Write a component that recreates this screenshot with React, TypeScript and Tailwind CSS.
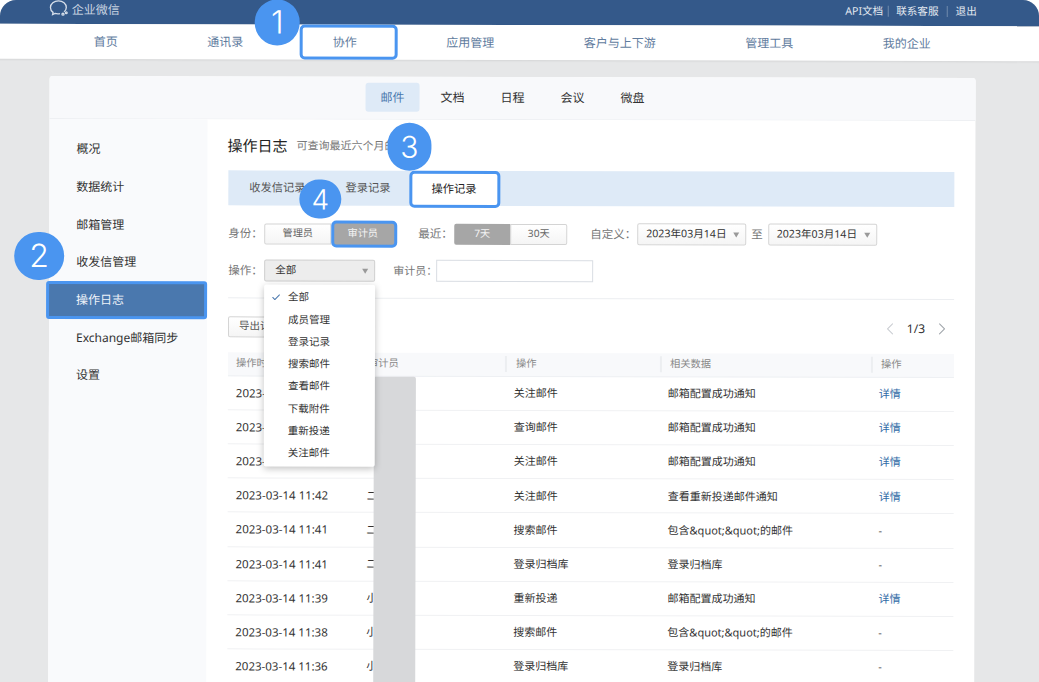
import React from "react";
import { Check, ChevronLeft, ChevronRight } from "lucide-react";

const navItems = ["首页", "通讯录", "协作", "应用管理", "客户与上下游", "管理工具", "我的企业"];
const subTabs = ["邮件", "文档", "日程", "会议", "微盘"];
const sideItems = ["概况", "数据统计", "邮箱管理", "收发信管理", "操作日志", "Exchange邮箱同步", "设置"];
const menu = ["全部", "成员管理", "登录记录", "搜索邮件", "查看邮件", "下载附件", "重新投递", "关注邮件"];
const rows = [
  ["2023-03-14 11:46", "", "关注邮件", "邮箱配置成功通知", "详情"],
  ["2023-03-14 11:45", "", "查询邮件", "邮箱配置成功通知", "详情"],
  ["2023-03-14 11:44", "", "关注邮件", "邮箱配置成功通知", "详情"],
  ["2023-03-14 11:42", "二", "关注邮件", "查看重新投递邮件通知", "详情"],
  ["2023-03-14 11:41", "二", "搜索邮件", "包含&quot;&quot;的邮件", "-"],
  ["2023-03-14 11:41", "二", "登录归档库", "登录归档库", "-"],
  ["2023-03-14 11:39", "小", "重新投递", "邮箱配置成功通知", "详情"],
  ["2023-03-14 11:38", "小", "搜索邮件", "包含&quot;&quot;的邮件", "-"],
  ["2023-03-14 11:36", "小", "登录归档库", "登录归档库", "-"],
];

function Caret() {
  return <span className="w-0 h-0 border-l-[3px] border-r-[3px] border-t-[5px] border-l-transparent border-r-transparent border-t-[#999]" />;
}

function DateSelect() {
  return (
    <div className="w-[109px] h-[21.5px] flex items-center justify-between pl-[8px] pr-[6px] border border-[#d4d4d4] rounded-[2px] bg-gradient-to-b from-white to-[#f5f5f5] text-[10.6px] text-[#333] whitespace-nowrap">
      <span>2023年03月14日</span>
      <Caret />
    </div>
  );
}

function Badge({ n, cls }: { n: string; cls: string }) {
  return (
    <div className={`absolute rounded-full bg-[#4a95f0] text-white flex items-center justify-center font-['Inter',sans-serif] font-light ${cls}`}>
      {n}
    </div>
  );
}

export default function App() {
  return (
    <div className="relative w-[1039px] h-[682px] overflow-hidden rounded-t-[16px] bg-[#e6e7e8] font-['Noto_Sans','Noto_Sans_CJK_SC',sans-serif] text-[#333]">
      <div className="relative w-[1055px] h-[698px] -ml-[8px] -mt-[8px] rotate-[0.13deg] overflow-hidden">
        {/* top bar */}
        <header className="h-[33px] pt-[8px] bg-[#34598a] flex items-center pl-[56px] pr-[71px]">
          <svg viewBox="0 0 20 18" className="w-[20px] h-[17px] -mt-[6px]" fill="none" stroke="#d5deea" strokeWidth="1.4">
            <path d="M15.6 12.5c1.6-1.3 2.4-3 2.4-4.6C18 4 14.3 1 9.7 1S1.2 4 1.2 7.9c0 2.1 1 4 2.8 5.3l-.5 2.4 2.6-1.3c1.6.5 3.6.6 5.2.2" />
            <circle cx="14.5" cy="15" r="1.1" />
            <circle cx="18" cy="13.5" r="0.9" />
          </svg>
          <span className="ml-[3px] -mt-[4px] text-[12px] text-[#c9d4e1]">企业微信</span>
          <div className="ml-auto flex items-center text-[10.6px] text-[#e4eaf1] -mt-[4px]">
            <span>API文档</span>
            <span className="ml-[5px] mr-[7px] w-px h-[11px] bg-[#6f8bad]" />
            <span>联系客服</span>
            <span className="mx-[8px] w-px h-[11px] bg-[#6f8bad]" />
            <span>退出</span>
          </div>
        </header>

        {/* main nav */}
        <nav className="h-[35px] bg-white flex items-stretch gap-[23.5px] pl-[68px] shadow-[0_1px_2px_rgba(0,0,0,0.08)] text-[12px] text-[#5f7c9e]">
          {navItems.map((item, i) => (
            <div
              key={item}
              className={
                i === 2
                  ? "flex items-center pl-[30px] pr-[38px] -mr-[8px] border-[3px] border-[#4a95f0] rounded-[5px]"
                  : "flex items-center px-[33px]"
              }
            >
              {item}
            </div>
          ))}
        </nav>

        {/* card */}
        <section className="mt-[17px] ml-[57px] w-[926px] h-[640px] rounded-t-[3px] bg-white">
          <div className="h-[42.5px] bg-[#f8f9fb] border-b border-[#eef0f3] flex justify-center gap-[6px] pt-[6px] text-[12px] rounded-t-[3px]">
            {subTabs.map((t, i) => (
              <div
                key={t}
                className={
                  i === 0
                    ? "h-[29px] px-[15px] flex items-center rounded-[3px] bg-[#deeaf7] text-[#4a78ae]"
                    : "h-[29px] px-[15px] flex items-center text-[#333]"
                }
              >
                {t}
              </div>
            ))}
          </div>

          <div className="flex h-[600px]">
            {/* sidebar */}
            <aside className="w-[158px] bg-[#f9fafc] pt-[12px] text-[12px] shrink-0">
              {sideItems.map((s, i) => (
                <div
                  key={s}
                  className={
                    i === 4
                      ? "relative -ml-[3px] w-[161px] h-[37.7px] flex items-center pl-[27px] bg-[#4a78ae] text-[#eef3f9] border-[3px] border-[#4a95f0] rounded-[3px]"
                      : "h-[37.7px] flex items-center pl-[27px]"
                  }
                >
                  {s}
                </div>
              ))}
            </aside>

            {/* content */}
            <main className="flex-1 pl-[21px] pr-[21px]">
              <div className="h-[51px] flex items-center pt-[2px]">
                <h1 className="text-[15px] font-normal text-[#222] -ml-[1px]">操作日志</h1>
                <span className="ml-[9px] text-[11px] text-[#777] mt-[1px]">可查询最近六个月的记录</span>
              </div>

              <div className="h-[35.6px] bg-[#deeaf7] flex items-stretch text-[11.25px] whitespace-nowrap">
                <div className="pl-[21px] pr-[20px] flex items-center pt-[1px] text-[#555]">收发信记录</div>
                <div className="pl-[20px] pr-[19px] flex items-center pt-[1px] text-[#555]">登录记录</div>
                <div className="h-[37px] pl-[19px] pr-[21px] flex items-center bg-white border-[3px] border-[#4a95f0] rounded-[5px] text-[#222]">操作记录</div>
              </div>

              <div className="mt-[17px] h-[22px] flex items-center text-[11.5px] text-[#777] whitespace-nowrap">
                <span className="w-[36px]">身份：</span>
                <div className="flex items-center text-[10.2px]">
                  <div className="w-[67px] h-[21px] flex items-center justify-center border border-[#d4d4d4] rounded-l-[2px] bg-gradient-to-b from-white to-[#f5f5f5] text-[#666]">管理员</div>
                  <div className="w-[66px] h-[27px] flex items-center justify-center pr-[3px] border-[3px] border-[#4a95f0] rounded-[5px] bg-[#a6a6a6] text-[#f4f4f4]">审计员</div>
                </div>
                <span className="ml-[21px] w-[36px]">最近：</span>
                <div className="flex items-center text-[10.2px] h-[21px]">
                  <div className="w-[56px] h-full flex items-center justify-center bg-[#a6a6a6] text-[#f4f4f4] rounded-l-[2px]">7天</div>
                  <div className="w-[57px] h-full flex items-center justify-center border border-[#d4d4d4] rounded-r-[2px] bg-gradient-to-b from-white to-[#f5f5f5] text-[#666]">30天</div>
                </div>
                <span className="ml-[23px] w-[47px]">自定义：</span>
                <DateSelect />
                <span className="mx-[5px]">至</span>
                <DateSelect />
              </div>

              <div className="mt-[15px] h-[22px] flex items-center text-[11.5px] text-[#777] whitespace-nowrap">
                <span className="w-[36px]">操作：</span>
                <div className="w-[111px] h-[21.5px] flex items-center justify-between pl-[10px] pr-[6px] border border-[#cfcfcf] rounded-[2px] bg-[#ededed] text-[10.5px] text-[#333]">
                  <span>全部</span>
                  <Caret />
                </div>
                <span className="ml-[18px] w-[43px] shrink-0 text-[11px]">审计员：</span>
                <div className="w-[157px] h-[22px] border border-[#d9dde3] bg-white" />
              </div>

              <div className="mt-[16px] border-t border-[#eceef1]" />

              <div className="mt-[17px] h-[22px] flex items-center justify-between">
                <div className="w-[70px] h-[21px] border border-[#d4d4d4] rounded-[2px] bg-gradient-to-b from-white to-[#f5f5f5] flex items-center pl-[10px] text-[10.5px] text-[#555] whitespace-nowrap">导出记录</div>
                <div className="flex items-center text-[12px] text-[#333] pt-[2px] pr-[2px]">
                  <ChevronLeft className="w-[20px] h-[20px] text-[#c9ccd1]" strokeWidth={1.2} />
                  <span className="mx-[7px]">1/3</span>
                  <ChevronRight className="w-[20px] h-[20px] text-[#9ea3a9]" strokeWidth={1.2} />
                </div>
              </div>

              <div className="mt-[14.5px] h-[24px] grid grid-cols-[131px_146px_155px_211px_83px] bg-[#f8f9fb] border-b border-[#eef0f3] items-center text-[10.3px] text-[#888]">
                <div className="pl-[8px]">操作时间</div>
                <div className="pl-[9px]">审计员</div>
                <div className="pl-[9px] border-l-2 border-[#eceef1]">操作</div>
                <div className="pl-[8px] border-l-2 border-[#eceef1]">相关数据</div>
                <div className="pl-[8px] border-l-2 border-[#eceef1]">操作</div>
              </div>

              {rows.map((r, i) => (
                <div key={i} className="h-[34.2px] grid grid-cols-[131px_146px_155px_211px_83px] items-center border-b border-[#f0f1f3] text-[11px] text-[#333]">
                  <div className="pl-[8px] text-[11.5px] whitespace-nowrap">{r[0]}</div>
                  <div className="pl-[8px]">{r[1]}</div>
                  <div className="pl-[9px]">{r[2]}</div>
                  <div className="pl-[8px]">{r[3]}</div>
                  <div className={r[4] === "详情" ? "pl-[8px] text-[#2f6aa6]" : "pl-[8px] text-[#333]"}>{r[4]}</div>
                </div>
              ))}
            </main>
          </div>
        </section>

        {/* open select menu */}
        <div className="absolute left-[272px] top-[293px] w-[111px] h-[182px] py-[2px] bg-white rounded-[2px] shadow-[0_2px_7px_rgba(0,0,0,0.25)] text-[10.5px] text-[#333] z-20">
          {menu.map((m, i) => (
            <div key={m} className="relative h-[22.3px] flex items-center pl-[24px]">
              {i === 0 && <Check className="absolute left-[7px] w-[10px] h-[10px] text-[#4a78ae]" strokeWidth={2.5} />}
              {m}
            </div>
          ))}
        </div>

        {/* redaction block */}
        <div className="absolute left-[382px] top-[385px] w-[42px] h-[320px] bg-[#d7d8da] rounded-t-[2px] z-10" />

        <Badge n="1" cls="left-[262px] top-[8px] w-[45px] h-[46px] text-[32px] z-30" />
        <Badge n="2" cls="left-[22px] top-[241px] w-[50px] h-[48px] text-[32px] z-30" />
        <Badge n="3" cls="left-[395px] top-[131px] w-[44px] h-[48px] text-[30px] z-30" />
        <Badge n="4" cls="left-[307px] top-[188px] w-[42px] h-[39px] text-[28px] z-30" />
      </div>
    </div>
  );
}
